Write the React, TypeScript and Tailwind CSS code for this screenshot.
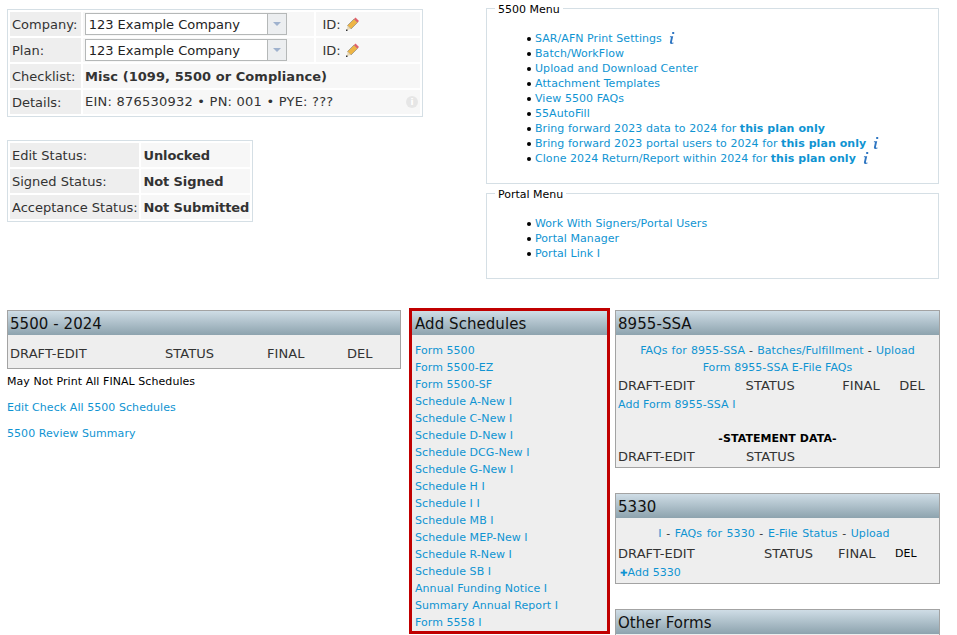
import type { ReactNode } from 'react';

const schedules = [
  'Form 5500',
  'Form 5500-EZ',
  'Form 5500-SF',
  'Schedule A-New I',
  'Schedule C-New I',
  'Schedule D-New I',
  'Schedule DCG-New I',
  'Schedule G-New I',
  'Schedule H I',
  'Schedule I I',
  'Schedule MB I',
  'Schedule MEP-New I',
  'Schedule R-New I',
  'Schedule SB I',
  'Annual Funding Notice I',
  'Summary Annual Report I',
  'Form 5558 I',
];

const Pencil = () => (
  <svg width="14" height="14" viewBox="0 0 14 14" className="inline-block ml-[4px] align-[-2px]">
    <path d="M2.5 8.5 L9 2 L12.5 5.5 L6 12 Z" fill="#eeb545" stroke="#8f8a80" strokeWidth="0.7" />
    <path d="M9 2 L10.5 0.5 L14 4 L12.5 5.5 Z" fill="#e2606a" />
    <path d="M2.5 8.5 L6 12 L2 13 Z" fill="#ead9b4" />
    <path d="M1 12.5 L2.5 12.5 L2.5 14 L1 14 Z" fill="#333" />
  </svg>
);

const InfoI = () => (
  <svg width="8" height="14" viewBox="0 0 8 14" className="inline-block ml-[6px] align-[-3px]">
    <path d="M4.2 1 H6.2 V3 H4.2 Z" fill="#2f76c2" />
    <path d="M2 5.2 H5.2 L3.9 11 Q3.8 12 5.6 11.4 L5.4 12.6 Q2 13.6 1.9 11.4 L3 6.2 H1.8 Z" fill="#2f76c2" />
  </svg>
);

const Select = () => (
  <div className="w-[202px] h-[22px] ml-[2px] flex border border-[#b5b8b8] bg-white">
    <span className="flex-1 pl-[3px] text-[13px] leading-[22px] text-[#222]">123 Example Company</span>
    <span className="w-[19px] border-l border-[#b5b8b8] bg-[#eceef0] flex items-center justify-center">
      <span className="w-0 h-0 border-x-[4px] border-x-transparent border-t-[4px] border-t-[#9fb2ce]" />
    </span>
  </div>
);

const InfoRow = ({ label, children, id }: { label: string; children: ReactNode; id?: boolean }) => (
  <div className="flex gap-[2px] h-[24px]">
    <div className="w-[71px] bg-[#eeeeee] pl-[2px] leading-[26px]">{label}</div>
    {id ? (
      <>
        <div className="w-[233px] bg-[#f7f7f7] flex items-center">{children}</div>
        <div className="w-[104px] bg-[#f7f7f7] pl-[6px] leading-[26px]">
          ID:
          <Pencil />
        </div>
      </>
    ) : (
      <div className="flex-1 bg-[#f7f7f7] pl-[2px] leading-[26px] flex justify-between items-center pr-[2px]">
        {children}
      </div>
    )}
  </div>
);

const StatusRow = ({ label, value }: { label: string; value: string }) => (
  <div className="flex gap-[2px] h-[24px]">
    <div className="w-[130px] bg-[#eeeeee] pl-[2px] leading-[26px]">{label}</div>
    <div className="w-[109px] bg-[#f7f7f7] pl-[2px] leading-[26px] font-bold whitespace-nowrap tracking-[-0.1px]">
      {value}
    </div>
  </div>
);

const Menu = ({ title, className, children }: { title: string; className: string; children: ReactNode }) => (
  <div className={`relative border border-[#d5dfe5] ${className}`}>
    <span className="absolute left-[8px] top-[-6px] bg-white px-[3px] text-[11px] leading-[13px] text-black">
      {title}
    </span>
    <ul className="pl-[48px] text-[11px] leading-[15px] tracking-[0.06px] text-[#0f94d2]">{children}</ul>
  </div>
);

const Item = ({ children }: { children: ReactNode }) => (
  <li className="relative before:absolute before:left-[-8px] before:top-[6px] before:w-[4px] before:h-[4px] before:rounded-full before:bg-black">
    {children}
  </li>
);

const Header = ({ title, className = 'pl-[2px]' }: { title: string; className?: string }) => (
  <div className={`h-[24px] text-[15px] leading-[27px] text-[#111] bg-gradient-to-b from-[#cfdde6] to-[#8da3ae] ${className}`}>
    {title}
  </div>
);

const Cols = ({ items, className = '' }: { items: [string, number][]; className?: string }) => (
  <div className={`flex text-[13px] text-[#333] ${className}`}>
    {items.map(([t, w]) => (
      <span key={t} style={{ width: w }}>
        {t}
      </span>
    ))}
  </div>
);

const A = ({ children }: { children: ReactNode }) => <a className="text-[#0f94d2]">{children}</a>;

export default function App() {
  return (
    <div className="w-[957px] h-[635px] overflow-hidden bg-white text-[13px] text-[#333] font-['DejaVu_Sans','Liberation_Sans',sans-serif]">
      <div className="flex h-[308px]">
        <div className="w-[479px] pl-[7px] pt-[9px]">
          <div className="w-[416px] h-[108px] border border-[#d5dfe5] p-[2px] flex flex-col gap-[2px]">
            <InfoRow label="Company:" id>
              <Select />
            </InfoRow>
            <InfoRow label="Plan:" id>
              <Select />
            </InfoRow>
            <InfoRow label="Checklist:">
              <b className="mt-[2px] tracking-[0.06px]">Misc (1099, 5500 or Compliance)</b>
            </InfoRow>
            <InfoRow label="Details:">
              <span className="tracking-[0.23px]">EIN: 876530932 • PN: 001 • PYE: ???</span>
              <span className="w-[12px] h-[12px] rounded-full bg-[#e6e6e6] text-white text-[9px] leading-[12px] text-center font-bold">
                i
              </span>
            </InfoRow>
          </div>
          <div className="w-[246px] h-[82px] mt-[23px] border border-[#d5dfe5] p-[2px] flex flex-col gap-[2px]">
            <StatusRow label="Edit Status:" value="Unlocked" />
            <StatusRow label="Signed Status:" value="Not Signed" />
            <StatusRow label="Acceptance Status:" value="Not Submitted" />
          </div>
        </div>
        <div className="pl-[7px] pt-[8px]">
          <Menu title="5500 Menu" className="w-[453px] h-[176px] pt-[22px]">
            <Item>
              <A>SAR/AFN Print Settings</A>
              <InfoI />
            </Item>
            <Item><A>Batch/WorkFlow</A></Item>
            <Item><A>Upload and Download Center</A></Item>
            <Item><A>Attachment Templates</A></Item>
            <Item><A>View 5500 FAQs</A></Item>
            <Item><A>55AutoFill</A></Item>
            <Item><A>Bring forward 2023 data to 2024 for <b>this plan only</b></A></Item>
            <Item>
              <A>Bring forward 2023 portal users to 2024 for <b>this plan only</b></A>
              <InfoI />
            </Item>
            <Item>
              <A>Clone 2024 Return/Report within 2024 for <b>this plan only</b></A>
              <InfoI />
            </Item>
          </Menu>
          <Menu title="Portal Menu" className="w-[453px] h-[86px] mt-[9px] pt-[22px]">
            <Item><A>Work With Signers/Portal Users</A></Item>
            <Item><A>Portal Manager</A></Item>
            <Item><A>Portal Link I</A></Item>
          </Menu>
        </div>
      </div>

      <div className="flex items-start tracking-[0.06px]">
        <div className="w-[394px] ml-[7px] mt-[2px]">
          <div className="border border-[#a3a3a3] bg-[#eeeeee] h-[59px]">
            <Header title="5500 - 2024" />
            <Cols
              className="pl-[2px] mt-[11px] leading-[16px]"
              items={[['DRAFT-EDIT', 155], ['STATUS', 102], ['FINAL', 80], ['DEL', 40]]}
            />
          </div>
          <div className="mt-[5px] text-[11px] leading-[16px] flex flex-col gap-[10px] text-black">
            <span>May Not Print All FINAL Schedules</span>
            <A>Edit Check All 5500 Schedules</A>
            <A>5500 Review Summary</A>
          </div>
        </div>

        <div className="w-[201px] h-[326px] ml-[8px] border-[3px] border-[#c00000] bg-[#eeeeee]">
          <Header title="Add Schedules" className="pl-[3px]" />
          <div className="pl-[3px] pt-[7px] flex flex-col text-[11px] leading-[17px]">
            {schedules.map((s) => (
              <A key={s}>{s}</A>
            ))}
          </div>
        </div>

        <div className="w-[325px] ml-[5px] mt-[2px] flex flex-col gap-[25px]">
          <div className="border border-[#a3a3a3] bg-[#eeeeee] h-[158px]">
            <Header title="8955-SSA" />
            <div className="pt-[7px] text-center text-[11px] leading-[17px]">
              <div className="[word-spacing:0.5px]"><A>FAQs for 8955-SSA</A> - <A>Batches/Fulfillment</A> - <A>Upload</A></div>
              <div><A>Form 8955-SSA E-File FAQs</A></div>
            </div>
            <Cols
              className="pl-[2px] leading-[19px]"
              items={[['DRAFT-EDIT', 128], ['STATUS', 97], ['FINAL', 57], ['DEL', 40]]}
            />
            <div className="pl-[2px] mt-[1px] text-[11px] leading-[18px]"><A>Add Form 8955-SSA I</A></div>
            <div className="mt-[16px] text-center text-[11px] leading-[17px] font-bold text-black">-STATEMENT DATA-</div>
            <Cols className="pl-[2px] leading-[19px]" items={[['DRAFT-EDIT', 128], ['STATUS', 97]]} />
          </div>

          <div className="border border-[#a3a3a3] bg-[#eeeeee] h-[91px]">
            <Header title="5330" />
            <div className="pt-[7px] pr-[7px] text-center text-[11px] leading-[17px] [word-spacing:1px]">
              <A>I</A> - <A>FAQs for 5330</A> - <A>E-File Status</A> - <A>Upload</A>
            </div>
            <div className="flex pl-[2px] mt-[2px] items-center leading-[20px]">
              <Cols items={[['DRAFT-EDIT', 146], ['STATUS', 74], ['FINAL', 57]]} className="w-[277px]" />
              <span className="text-[11px] text-black">DEL</span>
            </div>
            <div className="pl-[4px] text-[11px] leading-[18px]">
              <A><span className="text-[9px]">✚</span>Add 5330</A>
            </div>
          </div>

          <div className="border border-[#a3a3a3] bg-[#eeeeee] h-[60px]">
            <Header title="Other Forms" />
          </div>
        </div>
      </div>
    </div>
  );
}
